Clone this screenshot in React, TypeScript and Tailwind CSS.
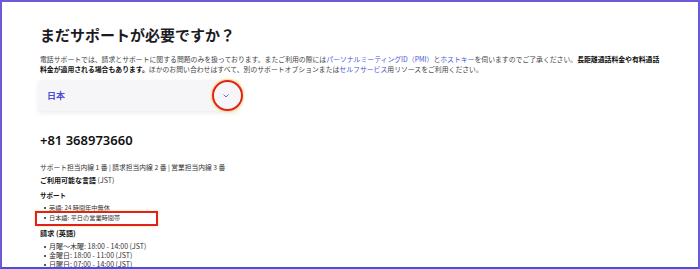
const jp = { fontFamily: '"Noto Sans CJK JP", "Noto Sans", sans-serif' };

function Bullet({ children }: { children: React.ReactNode }) {
  return (
    <li className="flex items-center">
      <span className="w-[9px] flex justify-center">
        <span className="w-[2px] h-[2px] rounded-full bg-[#222]" />
      </span>
      <span>{children}</span>
    </li>
  );
}

export default function App() {
  return (
    <div
      className="w-[700px] h-[269px] overflow-hidden bg-white border-2 border-[#6b5bd6] border-b-[#4b4de0] pl-[36px] pt-[23px] text-[#333]"
      style={jp}
    >
      {/* Heading */}
      <h1 className="text-[15px] leading-[20px] font-bold text-[#1b1b24] pl-[2px] whitespace-nowrap">
        まだサポートが必要ですか？
      </h1>

      <p className="mt-[9px] text-[6.85px] leading-[10px] text-[#444] pl-[2px] whitespace-nowrap">
        電話サポートでは、請求とサポートに関する問題のみを扱っております。またご利用の際には
        <span className="text-[#4a55d8]">パーソナルミーティングID（PMI）</span>と
        <span className="text-[#4a55d8]">ホストキー</span>を伺いますのでご了承ください。
        <b className="text-[#111]">長距離通話料金や有料通話</b>
        <br />
        <b className="text-[#111]">料金が適用される場合もあります。</b>ほかのお問い合わせはすべて、別のサポートオプションまたは
        <span className="text-[#4a55d8]">セルフサービス</span>用リソースをご利用ください。
      </p>

      {/* Country dropdown */}
      <div className="relative mt-[6px] w-[201px] h-[31px] rounded-[3px] bg-[#f6f6f9] shadow-[0_2px_5px_rgba(0,0,0,0.08)] flex items-center justify-between pl-[9px] pr-[9px]">
        <span className="text-[9px] font-bold text-[#4b4fd6]">日本</span>
        <svg width="6" height="4" viewBox="0 0 6 4" className="mr-[1px]">
          <path d="M0.5 0.5 L3 3 L5.5 0.5" fill="none" stroke="#5b5bd6" strokeWidth="0.9" />
        </svg>
        <span className="absolute left-[174px] top-0 w-[31px] h-[31px] rounded-full border-2 border-[#e0221c] shadow-[0_0_2px_1px_rgba(255,200,60,0.7)]" />
      </div>

      {/* Phone */}
      <div className="mt-[21px] text-[13px] leading-[16px] font-semibold text-[#111] pl-[2px]" style={{ fontFamily: '"Noto Sans", sans-serif' }}>
        +81 368973660
      </div>

      <div className="mt-[14px] text-[6.75px] leading-[10px] pl-[2px]">
        サポート担当内線 1 番 | 請求担当内線 2 番 | 営業担当内線 3 番
      </div>

      <div className="mt-[3px] text-[7px] leading-[10px] pl-[2px]">
        <b className="text-[#111]">ご利用可能な言語</b> (JST)
      </div>

      <div className="mt-[5px] text-[6.5px] leading-[10px] pl-[2px] font-bold text-[#111]">サポート</div>

      <ul className="mt-[3px] text-[6.2px] leading-[10px] pl-[2px]">
        <Bullet>英語: 24 時間年中無休</Bullet>
        <li className="relative flex items-center">
          <span className="w-[9px] flex justify-center">
            <span className="w-[2px] h-[2px] rounded-full bg-[#222]" />
          </span>
          <span>日本語: 平日の営業時間帯</span>
          <span className="absolute -left-[5px] -top-[2px] w-[123px] h-[15px] border-2 border-[#e0221c] shadow-[0_0_2px_rgba(255,200,60,0.7)]" />
        </li>
      </ul>

      <div className="mt-[5px] text-[7.2px] leading-[10px] pl-[2px] font-bold text-[#111]">請求 (英語)</div>

      <ul className="mt-[4px] text-[7px] leading-[9px] pl-[2px]">
        <Bullet>月曜〜木曜: 18:00 - 14:00 (JST)</Bullet>
        <Bullet>金曜日: 18:00 - 11:00 (JST)</Bullet>
        <Bullet>日曜日: 07:00 - 14:00 (JST)</Bullet>
      </ul>
    </div>
  );
}
